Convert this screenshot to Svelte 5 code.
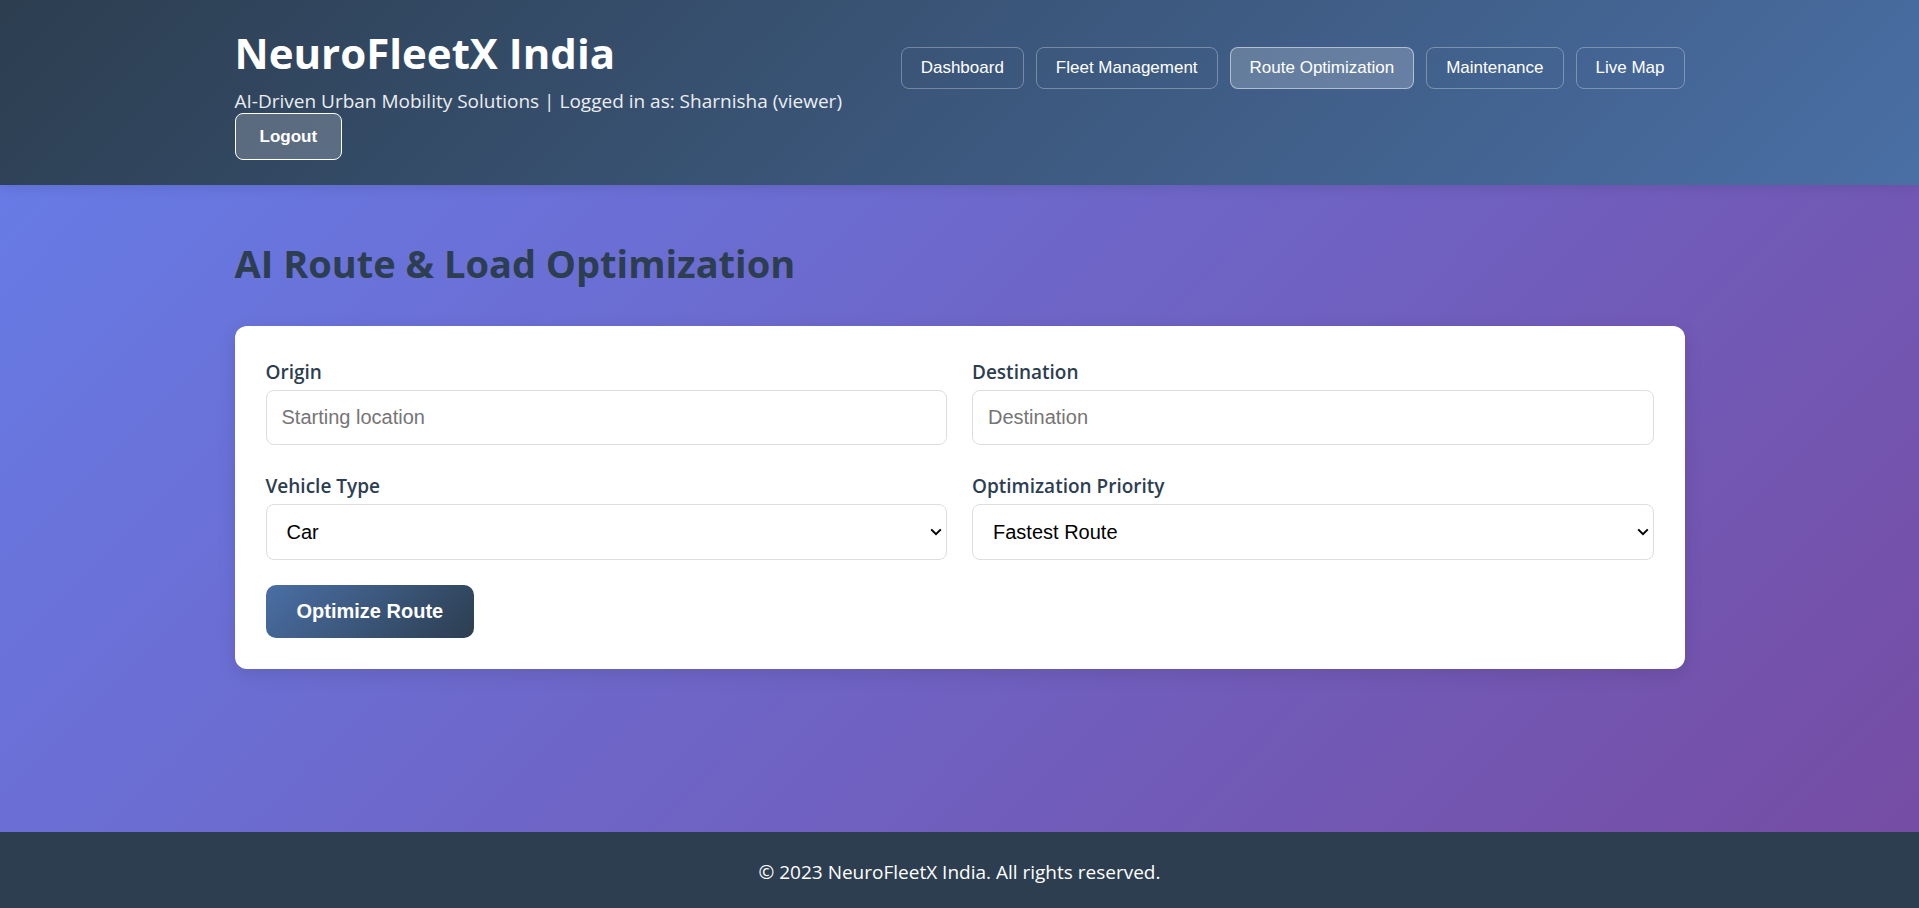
<script>
  const pages = ['Dashboard', 'Fleet Management', 'Route Optimization', 'Maintenance', 'Live Map'];
  let active = $state('Route Optimization');
  let origin = $state('');
  let destination = $state('');
  let vehicle = $state('Car');
  let priority = $state('Fastest Route');
</script>

{#snippet chevron()}
  <svg class="chevron" viewBox="0 0 12 8" width="12" height="8" aria-hidden="true">
    <path d="M1.2 1.4 6 6.2l4.8-4.8" fill="none" stroke="#000" stroke-width="2" />
  </svg>
{/snippet}

<div class="page">
  <header>
    <div class="container">
      <div class="bar">
        <div>
          <h1>NeuroFleetX India</h1>
          <p class="tagline">AI-Driven Urban Mobility Solutions | Logged in as: Sharnisha (viewer)</p>
        </div>
        <nav>
          {#each pages as page}
            <button type="button" class:active={active === page} onclick={() => (active = page)}>{page}</button>
          {/each}
        </nav>
      </div>
      <button type="button" class="logout">Logout</button>
    </div>
  </header>

  <main class="container">
    <h2>AI Route &amp; Load Optimization</h2>
    <form onsubmit={(e) => e.preventDefault()}>
      <div class="fields">
        <div class="field">
          <label for="origin">Origin</label>
          <input id="origin" type="text" placeholder="Starting location" bind:value={origin} />
        </div>
        <div class="field">
          <label for="destination">Destination</label>
          <input id="destination" type="text" placeholder="Destination" bind:value={destination} />
        </div>
        <div class="field">
          <label for="vehicle">Vehicle Type</label>
          <div class="select">
            <select id="vehicle" bind:value={vehicle}>
              <option>Car</option>
            </select>
            {@render chevron()}
          </div>
        </div>
        <div class="field">
          <label for="priority">Optimization Priority</label>
          <div class="select">
            <select id="priority" bind:value={priority}>
              <option>Fastest Route</option>
            </select>
            {@render chevron()}
          </div>
        </div>
      </div>
      <button type="submit" class="submit">Optimize Route</button>
    </form>
  </main>

  <footer>
    <p>© 2023 NeuroFleetX India. All rights reserved.</p>
  </footer>
</div>

<style>
  :global(body) {
    margin: 0;
  }

  .page {
    display: flex;
    flex-direction: column;
    min-height: 100vh;
    background: linear-gradient(135deg, #667eea 0%, #764ba2 100%);
    color: #2c3e50;
    font-family: 'Segoe UI', 'Open Sans', sans-serif;
    font-size: 19px;
    line-height: 24px;
  }

  h1,
  h2,
  p {
    margin: 0;
  }

  button,
  input,
  select {
    box-sizing: border-box;
    font-family: Arial, 'Liberation Sans', sans-serif;
  }

  button {
    cursor: pointer;
  }

  .container {
    box-sizing: border-box;
    width: 100%;
    max-width: 1500px;
    margin: 0 auto;
    padding: 0 25px;
  }

  header {
    padding: 25px 0;
    background: linear-gradient(135deg, #2c3e50 0%, #4a6fa5 100%);
    box-shadow: 0 2px 12px rgba(0, 0, 0, 0.1);
    color: #fff;
  }

  .bar {
    display: flex;
    flex-wrap: wrap;
    align-items: center;
    justify-content: space-between;
  }

  h1 {
    margin-bottom: 8px;
    font-size: 42px;
    line-height: 56px;
  }

  .tagline {
    opacity: 0.9;
  }

  nav {
    display: flex;
    flex-wrap: wrap;
    gap: 12px;
    margin-bottom: 2px;
  }

  nav button {
    height: 42px;
    padding: 0 19px;
    border: 1px solid rgba(255, 255, 255, 0.3);
    border-radius: 8px;
    background: transparent;
    color: #fff;
    font-size: 17px;
  }

  nav button.active {
    border-color: rgba(255, 255, 255, 0.5);
    background: rgba(255, 255, 255, 0.2);
  }

  .logout {
    display: block;
    height: 47px;
    padding: 0 24px;
    border: 1px solid #fff;
    border-radius: 8px;
    background: rgba(255, 255, 255, 0.2);
    color: #fff;
    font-size: 17px;
    font-weight: 700;
  }

  main {
    flex: 1;
  }

  main.container {
    padding-top: 50px;
    padding-bottom: 50px;
  }

  h2 {
    margin-bottom: 35px;
    font-size: 38px;
    line-height: 56px;
  }

  form {
    padding: 32px 31px 31px;
    border-radius: 12px;
    background: #fff;
    box-shadow: 0 5px 19px rgba(0, 0, 0, 0.1);
  }

  .fields {
    display: grid;
    grid-template-columns: 1fr 1fr;
    gap: 27px 25px;
    margin-bottom: 25px;
  }

  .field {
    display: flex;
    flex-direction: column;
    gap: 4px;
  }

  label {
    font-weight: 600;
    line-height: 28px;
  }

  input,
  select {
    width: 100%;
    border: 1px solid #ddd;
    border-radius: 8px;
    background: #fff;
    color: #000;
    font-size: 20px;
  }

  input {
    height: 55px;
    padding: 0 15px;
  }

  input::placeholder {
    color: #757575;
  }

  .select {
    display: grid;
    align-items: center;
  }

  .select > * {
    grid-area: 1 / 1;
  }

  select {
    height: 56px;
    padding: 0 20px;
    appearance: none;
  }

  .chevron {
    justify-self: end;
    margin-right: 5px;
    pointer-events: none;
  }

  .submit {
    display: block;
    height: 53px;
    padding: 0 31px;
    border: none;
    border-radius: 10px;
    background: linear-gradient(135deg, #4a6fa5 0%, #2c3e50 100%);
    color: #fff;
    font-size: 20px;
    font-weight: 700;
  }

  footer {
    padding: 28px 25px 24px;
    background: #2c3e50;
    color: #fff;
    text-align: center;
  }
</style>
